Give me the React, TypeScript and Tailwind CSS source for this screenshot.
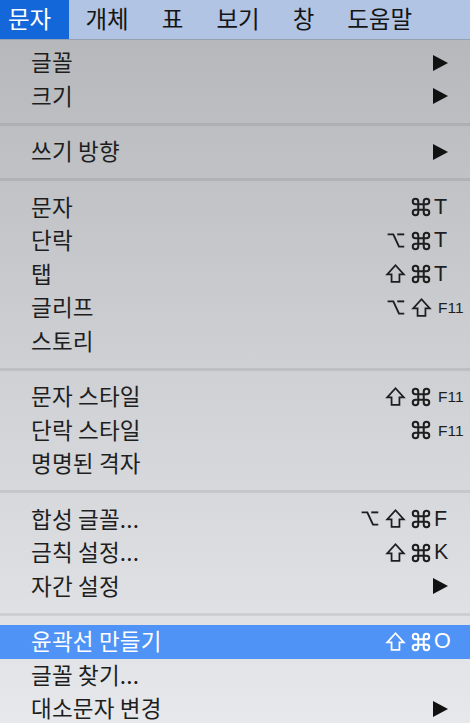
import React from "react";

const FONT = '"Noto Sans CJK KR", "Noto Sans", sans-serif';

type Mod = "cmd" | "opt" | "shift";
type Item = {
  label: string;
  mods?: Mod[];
  key?: string;
  small?: boolean;
  sub?: boolean;
  active?: boolean;
};

const groups: Item[][] = [
  [
    { label: "글꼴", sub: true },
    { label: "크기", sub: true },
  ],
  [{ label: "쓰기 방향", sub: true }],
  [
    { label: "문자", mods: ["cmd"], key: "T" },
    { label: "단락", mods: ["opt", "cmd"], key: "T" },
    { label: "탭", mods: ["shift", "cmd"], key: "T" },
    { label: "글리프", mods: ["opt", "shift"], key: "F11", small: true },
    { label: "스토리" },
  ],
  [
    { label: "문자 스타일", mods: ["shift", "cmd"], key: "F11", small: true },
    { label: "단락 스타일", mods: ["cmd"], key: "F11", small: true },
    { label: "명명된 격자" },
  ],
  [
    { label: "합성 글꼴...", mods: ["opt", "shift", "cmd"], key: "F" },
    { label: "금칙 설정...", mods: ["shift", "cmd"], key: "K" },
    { label: "자간 설정", sub: true },
  ],
  [
    { label: "윤곽선 만들기", mods: ["shift", "cmd"], key: "O", active: true },
    { label: "글꼴 찾기..." },
    { label: "대소문자 변경", sub: true },
  ],
];

function ModIcon({ m }: { m: Mod }) {
  const common = {
    width: 21,
    height: 21,
    viewBox: "0 0 24 24",
    fill: "none",
    stroke: "currentColor",
    strokeWidth: 2.2,
    strokeLinecap: "butt" as const,
    strokeLinejoin: "miter" as const,
  };
  if (m === "cmd")
    return (
      <svg {...common} width={22} height={22}>
        <path d="M15 6v12a3 3 0 1 0 3-3H6a3 3 0 1 0 3 3V6a3 3 0 1 0-3 3h12a3 3 0 1 0-3-3" />
      </svg>
    );
  if (m === "opt")
    return (
      <svg {...common}>
        <path d="M3 5h6.5l6.5 14h6" />
        <path d="M14 5h8" />
      </svg>
    );
  return (
    <svg {...common} strokeWidth={2}>
      <path d="M7.5 21.5v-8.5H2.5L12 2.5l9.5 10.5h-5v8.5H7.5z" />
    </svg>
  );
}

function Row({ it }: { it: Item }) {
  const color = it.active ? "text-white" : "text-[#1e1e1e]";
  return (
    <div
      className={`flex h-[33.5px] items-center pl-[31px] pr-[6px] ${
        it.active ? "bg-[#4f93f6]" : ""
      } ${color}`}
    >
      <span
        className="flex-1 pb-[3px] text-[22.5px] leading-none tracking-[0.2px]"
        style={{ fontFamily: FONT }}
      >
        {it.label}
      </span>
      {it.sub && (
        <svg width="15" height="16" viewBox="0 0 15 16" className="mr-[16px]">
          <polygon points="0,0 15,8 0,16" fill={it.active ? "#fff" : "#111"} />
        </svg>
      )}
      {it.key && (
        <div className="flex items-center">
          <div className="flex justify-end">
            {it.mods?.map((m, i) => (
              <span key={i} className="flex w-[26px] justify-end">
                <ModIcon m={m} />
              </span>
            ))}
          </div>
          <span
            className={`w-[32px] leading-none ${
              it.small ? "pl-[6px] text-[15.5px]" : "pl-[2px] text-[21.5px]"
            }`}
            style={{ fontFamily: '"Liberation Sans", Arial, sans-serif' }}
          >
            {it.key}
          </span>
        </div>
      )}
    </div>
  );
}

function Sep() {
  return (
    <div className="flex h-[22px] items-center">
      <div className="h-[3px] w-full bg-black/[0.08]" />
    </div>
  );
}

export default function App() {
  const menus = ["문자", "개체", "표", "보기", "창", "도움말"];
  return (
    <div
      className="relative h-[723px] w-[470px] overflow-hidden"
      style={{ fontFamily: FONT }}
    >
      <div className="flex h-[40px] border-b border-[#95a0b3] bg-[#b1c4e3]">
        {menus.map((m, i) => (
          <div
            key={m}
            className={`flex h-full items-center pb-[2px] text-[23.5px] leading-none ${
              i === 0
                ? "w-[69px] bg-[#1467d8] pl-[8px] text-white"
                : "px-[16.5px] text-[#151515]"
            }`}
          >
            {m}
          </div>
        ))}
      </div>
      <div className="h-[683px] bg-gradient-to-b from-[#b6b8bc] via-[#cfd1d4] to-[#e6e8eb] pt-[6px]">
        {groups.map((g, gi) => (
          <React.Fragment key={gi}>
            {gi > 0 && <Sep />}
            {g.map((it, ii) => (
              <Row key={ii} it={it} />
            ))}
          </React.Fragment>
        ))}
      </div>
    </div>
  );
}
